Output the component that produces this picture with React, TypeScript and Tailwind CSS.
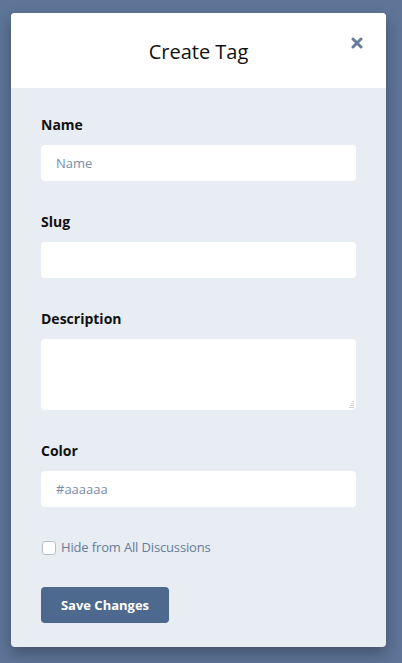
import React from "react";

export default function App() {
  const font = { fontFamily: '"Open Sans", "Noto Sans", sans-serif' };
  return (
    <div className="w-[402px] h-[663px] bg-[#5e7598] overflow-hidden relative" style={font}>
      <div className="pt-[13px] pl-[11px]">
        <div className="w-[375px] rounded-[4px] overflow-hidden bg-[#e8ecf3] shadow-[0_7px_15px_rgba(0,0,0,0.3)]">
          <div className="relative bg-white h-[75px] flex items-center justify-center">
            <h3 className="text-[20px] leading-[24px] text-[#111] mt-[2px]">Create Tag</h3>
            <button className="absolute right-[22px] top-[23px] w-[14px] h-[14px] flex items-center justify-center">
              <svg width="12" height="12" viewBox="0 0 12 12">
                <path d="M2 2 L10 10 M10 2 L2 10" stroke="#667c99" strokeWidth="3" strokeLinecap="round" />
              </svg>
            </button>
          </div>
          <div className="px-[30px] pt-[27px] pb-[24px] flex flex-col">
            <label className="block text-[14px] leading-[20px] font-bold text-[#111] mb-[10px]">Name</label>
            <input
              className="h-[36px] w-full rounded-[4px] bg-white px-[15px] text-[13px] text-[#111] placeholder:text-[#7b8da8] outline-none"
              placeholder="Name"
            />
            <label className="block mt-[31px] text-[14px] leading-[20px] font-bold text-[#111] mb-[10px]">Slug</label>
            <input className="h-[36px] w-full rounded-[4px] bg-white px-[15px] text-[13px] outline-none" />
            <label className="block mt-[31px] text-[14px] leading-[20px] font-bold text-[#111] mb-[10px]">Description</label>
            <div className="relative">
              <textarea className="h-[71px] w-full rounded-[4px] bg-white px-[15px] py-[8px] text-[13px] outline-none resize-none block" />
              <svg className="absolute right-[2px] bottom-[2px]" width="6" height="7" viewBox="0 0 6 7">
                <rect x="4" y="0" width="2" height="1" fill="#d5d5d5" />
                <rect x="3" y="2" width="3" height="1" fill="#d5d5d5" />
                <rect x="2" y="4" width="4" height="1" fill="#cfcfcf" />
                <rect x="1" y="6" width="5" height="1" fill="#cfcfcf" />
              </svg>
            </div>
            <label className="block mt-[31px] text-[14px] leading-[20px] font-bold text-[#111] mb-[10px]">Color</label>
            <input
              className="h-[36px] w-full rounded-[4px] bg-white px-[15px] text-[13px] text-[#111] placeholder:text-[#7b8da8] outline-none"
              placeholder="#aaaaaa"
            />
            <label className="mt-[31px] flex items-center h-[20px] text-[13px] tracking-[-0.15px] text-[#667c99]">
              <span className="w-[14px] h-[14px] ml-[1px] mr-[5px] rounded-[3px] border border-[#b8bfc8] bg-white shrink-0" />
              Hide from All Discussions
            </label>
            <div className="mt-[29px]">
              <button className="h-[36px] w-[128px] rounded-[4px] bg-[#4d698e] text-white text-[13px] font-bold pt-[1px]">
                Save Changes
              </button>
            </div>
          </div>
        </div>
      </div>
    </div>
  );
}
